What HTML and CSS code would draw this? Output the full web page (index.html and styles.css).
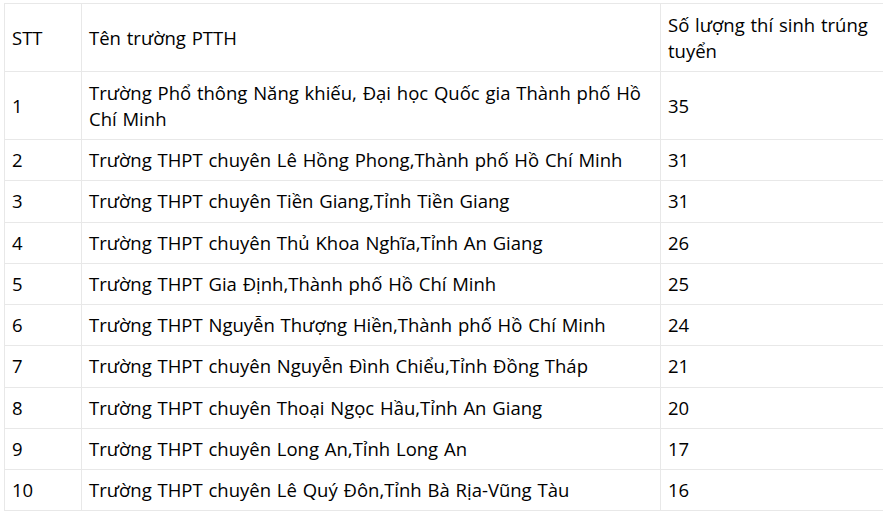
FILE: index.html
```html
<!DOCTYPE html>
<html lang="vi">
<head>
<meta charset="utf-8">
<title>Danh sách trường</title>
<link rel="stylesheet" href="styles.css">
</head>
<body>
<div class="wrap">
<table class="grid">
  <colgroup>
    <col class="c-stt">
    <col class="c-name">
    <col class="c-num">
  </colgroup>
  <tr class="tall">
    <td>STT</td>
    <td>Tên trường PTTH</td>
    <td>Số lượng thí sinh trúng tuyển</td>
  </tr>
  <tr class="tall">
    <td>1</td>
    <td>Trường Phổ thông Năng khiếu, Đại học Quốc gia Thành phố Hồ Chí Minh</td>
    <td>35</td>
  </tr>
  <tr><td>2</td><td>Trường THPT chuyên Lê Hồng Phong,Thành phố Hồ Chí Minh</td><td>31</td></tr>
  <tr><td>3</td><td>Trường THPT chuyên Tiền Giang,Tỉnh Tiền Giang</td><td>31</td></tr>
  <tr><td>4</td><td>Trường THPT chuyên Thủ Khoa Nghĩa,Tỉnh An Giang</td><td>26</td></tr>
  <tr><td>5</td><td>Trường THPT Gia Định,Thành phố Hồ Chí Minh</td><td>25</td></tr>
  <tr><td>6</td><td>Trường THPT Nguyễn Thượng Hiền,Thành phố Hồ Chí Minh</td><td>24</td></tr>
  <tr><td>7</td><td>Trường THPT chuyên Nguyễn Đình Chiểu,Tỉnh Đồng Tháp</td><td>21</td></tr>
  <tr><td>8</td><td>Trường THPT chuyên Thoại Ngọc Hầu,Tỉnh An Giang</td><td>20</td></tr>
  <tr><td>9</td><td>Trường THPT chuyên Long An,Tỉnh Long An</td><td>17</td></tr>
  <tr><td>10</td><td>Trường THPT chuyên Lê Quý Đôn,Tỉnh Bà Rịa-Vũng Tàu</td><td>16</td></tr>
</table>
</div>
</body>
</html>
```

FILE: styles.css
```css
html, body {
  margin: 0;
  padding: 0;
  background: #ffffff;
  overflow: hidden;
}
.wrap {
  padding: 3px 0 0 4px;
  width: 900px;
}
.grid {
  border-collapse: collapse;
  table-layout: fixed;
  width: 890px;
  font-family: "Open Sans", "Noto Sans", sans-serif;
  font-size: 18.5px;
  line-height: 26px;
  word-spacing: 1px;
  color: #000000;
}
.c-stt { width: 77px; }
.c-name { width: 579px; }
.c-num { width: 234px; }
.grid td {
  border: 1px solid #e8e8e8;
  padding: 0 7px;
  vertical-align: middle;
  height: 40.25px;
}
.grid tr.tall td {
  height: 67px;
}
```
